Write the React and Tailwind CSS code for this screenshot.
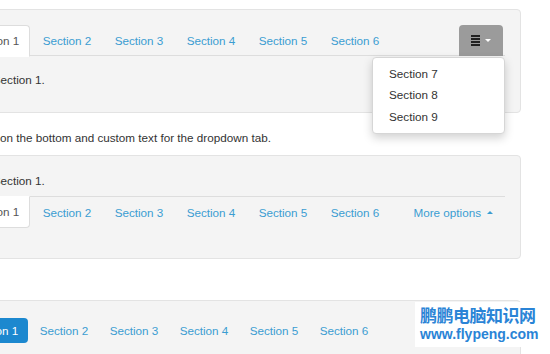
import React from "react";

const LINK = "text-[#3b9dd2]";

function TabTop({ label, active }) {
  if (active) {
    return (
      <div className="w-[70px] mr-[2px] h-[32px] -mb-px bg-white border border-[#dddddd] border-b-white rounded-t-[4px] flex items-center justify-center text-[#555555]">
        {label}
      </div>
    );
  }
  return (
    <div className={`w-[70px] mr-[2px] h-[31px] flex items-center justify-center ${LINK}`}>{label}</div>
  );
}

function TabBottom({ label, active }) {
  if (active) {
    return (
      <div className="w-[70px] mr-[2px] h-[32px] -mt-px bg-white border border-[#dddddd] border-t-white rounded-b-[4px] flex items-center justify-center text-[#555555]">
        {label}
      </div>
    );
  }
  return (
    <div className={`w-[70px] mr-[2px] h-[31px] flex items-center justify-center ${LINK}`}>{label}</div>
  );
}

function Pill({ label, active }) {
  if (active) {
    return (
      <div className="w-[68px] mr-[2px] h-[25px] rounded-[4px] bg-[#1c88cf] text-white flex items-center justify-center">
        {label}
      </div>
    );
  }
  return (
    <div className={`w-[68px] mr-[2px] h-[25px] flex items-center justify-center ${LINK}`}>{label}</div>
  );
}

const sections = ["Section 1", "Section 2", "Section 3", "Section 4", "Section 5", "Section 6"];

export default function App() {
  return (
    <div
      className="relative w-[550px] h-[354px] overflow-hidden bg-white text-[11.7px] text-[#333333]"
      style={{ fontFamily: '"Liberation Sans", Arial, sans-serif' }}
    >
      <div className="ml-[-56px] w-[577px] flex flex-col">
        {/* Panel 1 */}
        <div className="mt-[9px] border border-[#e3e3e3] bg-[#f4f4f4] rounded-[4px] p-[15px]">
          <div className="relative flex items-start h-[31px] border-b border-[#dddddd]">
            {sections.map((s, i) => (
              <TabTop key={s} label={s} active={i === 0} />
            ))}
            <div className="ml-auto mr-[2px] w-[44px] h-[31px] bg-[#9b9b9b] rounded-t-[4px] flex items-center justify-center gap-[5px]">
              <div className="flex flex-col gap-[1.5px] w-[9px]">
                <div className="h-[1.5px] bg-[#222]" />
                <div className="h-[1.5px] bg-[#222]" />
                <div className="h-[1.5px] bg-[#222]" />
                <div className="h-[1.5px] bg-[#222]" />
              </div>
              <div className="w-0 h-0 border-x-[3px] border-x-transparent border-t-[3px] border-t-white" />
            </div>
            <div className="absolute right-0 top-[32px] w-[133px] bg-white border border-[#d6d6d6] rounded-[4px] shadow-[0_4px_10px_rgba(0,0,0,0.18)] py-[5px] z-10">
              {["Section 7", "Section 8", "Section 9"].map((s) => (
                <div key={s} className="h-[21.5px] flex items-center pl-[16px] text-[#333333]">
                  {s}
                </div>
              ))}
            </div>
          </div>
          <div className="h-[41px] pt-[14px] pl-[2px] leading-[20px]">I'm in Section 1.</div>
        </div>

        <p className="mt-[15px] leading-[20px] pl-[4px]">With tabs on the bottom and custom text for the dropdown tab.</p>

        {/* Panel 2 */}
        <div className="mt-[7px] border border-[#e3e3e3] bg-[#f4f4f4] rounded-[4px] px-[15px] pt-[15px] pb-[31px]">
          <div className="h-[20px] leading-[20px] pl-[2px]">I'm in Section 1.</div>
          <div className="mt-[5px] flex items-start h-[31px] border-t border-[#dddddd]">
            {sections.map((s, i) => (
              <TabBottom key={s} label={s} active={i === 0} />
            ))}
            <div className={`ml-auto h-[31px] px-[12px] flex items-center gap-[6px] ${LINK}`}>
              <span>More options</span>
              <div className="w-0 h-0 border-x-[3px] border-x-transparent border-b-[3px] border-b-[#3b9dd2]" />
            </div>
          </div>
        </div>

        {/* Panel 3 */}
        <div className="mt-[41px] h-[80px] border border-[#e3e3e3] bg-[#f4f4f4] rounded-[4px] px-[15px] pt-[17px]">
          <div className="flex items-start">
            {sections.map((s, i) => (
              <Pill key={s} label={s} active={i === 0} />
            ))}
          </div>
        </div>
      </div>

      {/* Watermark overlay */}
      <div className="absolute left-[415px] top-[302px] w-[135px] h-[45px] bg-white flex flex-col items-start pl-[5px] pt-[3px] text-[#2a84d6]">
        <div
          className="text-[17px] leading-[20px] font-bold tracking-[-0.5px]"
          style={{ fontFamily: '"Noto Sans CJK SC", sans-serif' }}
        >
          鹏鹏电脑知识网
        </div>
        <div className="text-[14px] leading-[18px] font-bold">www.flypeng.com</div>
      </div>
    </div>
  );
}
